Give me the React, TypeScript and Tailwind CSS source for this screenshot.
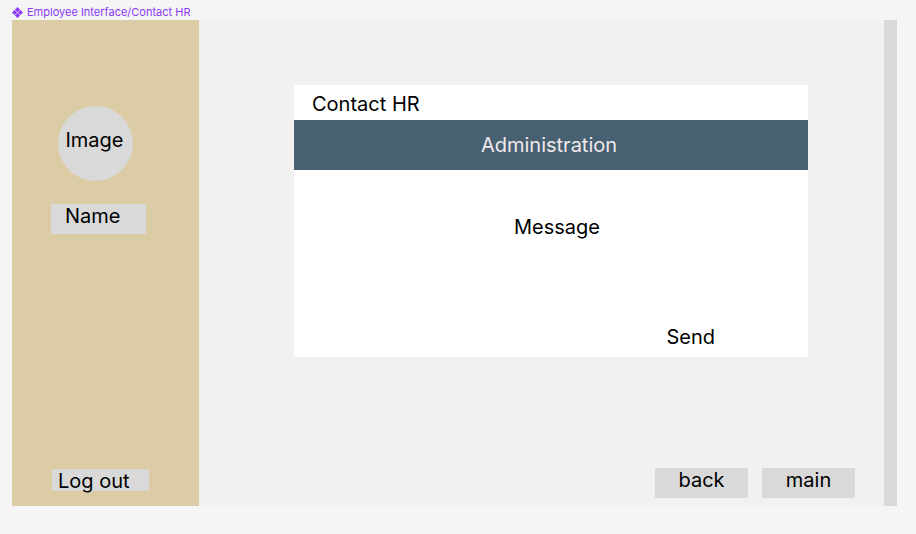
import React from "react";

function ComponentLabel() {
  return (
    <header className="flex h-5 items-center gap-1 pt-1 text-[11px] text-[#8a38f5]">
      <svg viewBox="0 0 12 12" className="h-[11px] w-[11px]" fill="currentColor" aria-hidden="true">
        <path d="M6 0 8.8 2.8 6 5.6 3.2 2.8ZM6 6.4 8.8 9.2 6 12 3.2 9.2ZM2.8 3.2 5.6 6 2.8 8.8 0 6ZM9.2 3.2 12 6 9.2 8.8 6.4 6Z" />
      </svg>
      <span>Employee Interface/Contact HR</span>
    </header>
  );
}

function Sidebar() {
  return (
    <aside className="flex w-[187px] shrink-0 flex-col items-start bg-[#dccca5] px-[39px] pt-[86px] pb-[15px]">
      <div className="ml-[7px] flex h-[75px] w-[75px] items-center justify-center rounded-full bg-[#d9d9d9] pr-[2px] pb-2">
        Image
      </div>
      <div className="mt-[23px] h-[30px] w-[95px] bg-[#d9d9d9] pl-[14px]">Name</div>
      <button type="button" className="mt-auto ml-px h-[22px] w-[97px] bg-[#d9d9d9] pl-[6px] text-left">
        Log out
      </button>
    </aside>
  );
}

function ContactCard() {
  return (
    <section className="mr-[76px] ml-[95px] flex flex-col bg-white">
      <h1 className="h-[35px] pt-[7px] pl-[18px]">Contact HR</h1>
      <h2 className="flex h-[50px] items-center justify-center bg-[#476173] pr-1 text-[#f2e9e9]">Administration</h2>
      <label htmlFor="message" className="pt-[45px] pl-3 text-center">Message</label>
      <textarea id="message" className="block h-[86px] resize-none bg-transparent px-4 outline-none" />
      <button type="button" className="mr-[93px] mb-2 self-end">Send</button>
    </section>
  );
}

export default function App() {
  return (
    <div className="flex min-h-screen flex-col bg-[#f5f5f5] pr-[19px] pb-7 pl-3 font-['Inter',sans-serif] text-[20px] leading-6 text-black">
      <ComponentLabel />
      <div className="flex grow bg-[#f1f1ef]">
        <Sidebar />
        <main className="flex grow flex-col justify-between pt-[65px] pb-2">
          <ContactCard />
          <nav className="flex justify-end gap-[14px] pr-[29px]">
            <button type="button" className="h-[30px] w-[93px] bg-[#d9d9d9] pb-[6px]">back</button>
            <button type="button" className="h-[30px] w-[93px] bg-[#d9d9d9] pb-[6px]">main</button>
          </nav>
        </main>
        <div className="w-[13px] shrink-0 bg-[#d9d9d9]" />
      </div>
    </div>
  );
}
